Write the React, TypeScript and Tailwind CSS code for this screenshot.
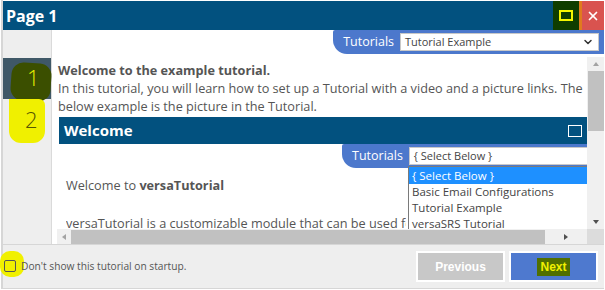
import { ChevronDown, X } from "lucide-react";

const font = "font-['Open_Sans','Noto_Sans',sans-serif]";

function Arrow({ dir }: { dir: "up" | "down" | "left" | "right" }) {
  const pts = {
    up: "1,6 4,2 7,6",
    down: "1,2 4,6 7,2",
    left: "6,1 2,4 6,7",
    right: "2,1 6,4 2,7",
  }[dir];
  return (
    <svg width="8" height="8" viewBox="0 0 8 8">
      <polygon points={pts} fill={dir === "right" || dir === "down" ? "#505050" : "#a3a3a3"} />
    </svg>
  );
}

function TutorialsPill({ value }: { value: string }) {
  return (
    <div className="flex items-center h-[24px] bg-[#4c78cc] rounded-bl-[14px] rounded-tl-[2px] pl-[10px] pr-[5px] gap-[6px] shrink-0">
      <span className="text-white text-[12.5px] leading-none">Tutorials</span>
      <div className="w-[199px] h-[18px] bg-white border border-[#c8c8c8] flex items-center justify-between pl-[4px] pr-[4px]">
        <span className="text-[11px] text-[#444]">{value}</span>
        <ChevronDown size={12} strokeWidth={3} className="text-[#333]" />
      </div>
    </div>
  );
}

export default function App() {
  return (
    <div className={`w-[605px] h-[290px] bg-white ${font} overflow-hidden`}>
      <div className="w-[603px] h-[289px] ml-[1px] border-l-[2px] border-b border-[#d6d6d6] flex flex-col">
        {/* Title bar */}
        <div className="h-[29px] bg-[#02517f] flex items-center justify-between pl-[3px] mt-[1px]">
          <span className="text-white font-bold text-[16px] leading-none">Page 1</span>
          <div className="flex h-full items-stretch">
            <div className="w-[26px] bg-[#0f3d00] flex items-center justify-center">
              <div className="w-[14px] h-[11px] border-[2px] border-[#f5f500]" />
            </div>
            <div className="w-[3px] bg-[#e07a1e]" />
            <div className="w-[22px] bg-[#d9534f] flex items-center justify-center">
              <X size={14} strokeWidth={3} className="text-white" />
            </div>
          </div>
        </div>

        {/* Body */}
        <div className="flex flex-1 min-h-0">
          {/* Sidebar */}
          <div className="w-[49px] bg-[#eeeeee] border-r border-[#dadada] flex flex-col pt-[28px]">
            <div className="h-[41px] bg-[#3f5867] relative">
              <div className="absolute left-[8px] top-[5px] w-[40px] h-[38px] bg-[#3b4f00] rounded-[12px] rotate-[4deg]" />
              <span className="absolute left-[24px] top-[8px] text-[22px] leading-none text-[#e8f000] font-light">1</span>
            </div>
            <div className="h-[44px] relative">
              <div className="absolute left-[6px] top-[0px] w-[36px] h-[44px] bg-[#f0f000] rounded-b-[12px] rounded-tr-[6px]" />
              <span className="absolute left-[22px] top-[9px] text-[22px] leading-none text-[#555500] font-light">2</span>
            </div>
          </div>

          {/* Main */}
          <div className="flex-1 min-w-0 flex flex-col">
            <div className="flex justify-end">
              <TutorialsPill value="Tutorial Example" />
            </div>
            <div className="flex flex-1 min-h-0 pt-[3px]">
              <div className="flex-1 min-w-0 flex flex-col pl-[5px]">
                <div className="flex-1 min-h-0 overflow-hidden relative pl-[1px]">
                  <div className="text-[12.7px] leading-[18px] text-[#555] pt-[4px] whitespace-nowrap">
                    <div className="font-bold">Welcome to the example tutorial.</div>
                    <div>In this tutorial, you will learn how to set up a Tutorial with a video and a picture links. The</div>
                    <div>below example is the picture in the Tutorial.</div>
                  </div>
                  <div className="ml-[1px] mt-[2px]">
                    <div className="h-[27px] bg-[#02517f] flex items-center justify-between pl-[5px] pr-[5px]">
                      <span className="text-white font-bold text-[15px] leading-none">Welcome</span>
                      <div className="w-[14px] h-[12px] border-[1.5px] border-white" />
                    </div>
                    <div className="flex relative pl-[283px]">
                      <TutorialsPill value="{ Select Below }" />
                      {/* dropdown */}
                      <div className="absolute left-[349px] top-[22px] w-[200px] bg-white border border-[#7a7a7a] text-[11.5px] leading-[16px] text-[#444] z-10">
                        <div className="bg-[#1e90ff] text-white px-[3px] h-[17px] leading-[17px]">{"{ Select Below }"}</div>
                        <div className="px-[3px]">Basic Email Configurations</div>
                        <div className="px-[3px]">Tutorial Example</div>
                        <div className="px-[3px]">versaSRS Tutorial</div>
                      </div>
                    </div>
                    <div className="pl-[7px] text-[12.7px] text-[#555] whitespace-nowrap">
                      <div className="mt-[8px] leading-[18px]">
                        Welcome to <span className="font-bold">versaTutorial</span>
                      </div>
                      <div className="mt-[20px] leading-[18px] w-[340px] overflow-hidden">
                        versaTutorial is a customizable module that can be used fo
                      </div>
                    </div>
                  </div>
                </div>
                {/* horizontal scrollbar */}
                <div className="h-[15px] bg-[#f0f0f0] flex items-center">
                  <div className="w-[14px] flex justify-center">
                    <Arrow dir="left" />
                  </div>
                  <div className="flex-1 h-[14px] bg-[#c1c1c1]" />
                  <div className="w-[42px] flex justify-center">
                    <Arrow dir="right" />
                  </div>
                </div>
              </div>
              {/* vertical scrollbar */}
              <div className="w-[17px] flex flex-col">
                <div className="flex-1 bg-[#f0f0f0] flex flex-col items-center">
                  <div className="h-[14px] flex items-center">
                    <Arrow dir="up" />
                  </div>
                  <div className="w-[16px] h-[60px] bg-[#c1c1c1]" />
                  <div className="flex-1" />
                  <div className="h-[14px] flex items-center">
                    <Arrow dir="down" />
                  </div>
                </div>
                <div className="h-[15px] bg-[#dcdcdc]" />
              </div>
            </div>
          </div>
        </div>

        {/* Footer */}
        <div className="h-[44px] bg-[#eeeeee] border-t border-[#d6d6d6] flex items-center justify-between pr-[6px]">
          <div className="flex items-center relative">
            <div className="absolute left-[-3px] top-[-8px] w-[24px] h-[26px] bg-[#f0f000] rounded-[10px]" />
            <div className="relative w-[12px] h-[12px] border border-[#555] rounded-[2px] ml-[1px]" />
            <span className="relative text-[10.2px] text-[#555] ml-[5px]">Don't show this tutorial on startup.</span>
          </div>
          <div className="flex gap-[4px]">
            <div className="w-[89px] h-[31px] bg-[#c8c8c8] border-[2px] border-white flex items-center justify-center">
              <span className="text-white font-bold text-[12px] font-['Liberation_Sans',sans-serif]">Previous</span>
            </div>
            <div className="w-[89px] h-[31px] bg-[#4e79cf] border-[2px] border-white flex items-center justify-center">
              <span className="bg-[#506f00] text-[#f0f000] font-bold text-[12px] px-[3px] font-['Liberation_Sans',sans-serif]">Next</span>
            </div>
          </div>
        </div>
      </div>
    </div>
  );
}
